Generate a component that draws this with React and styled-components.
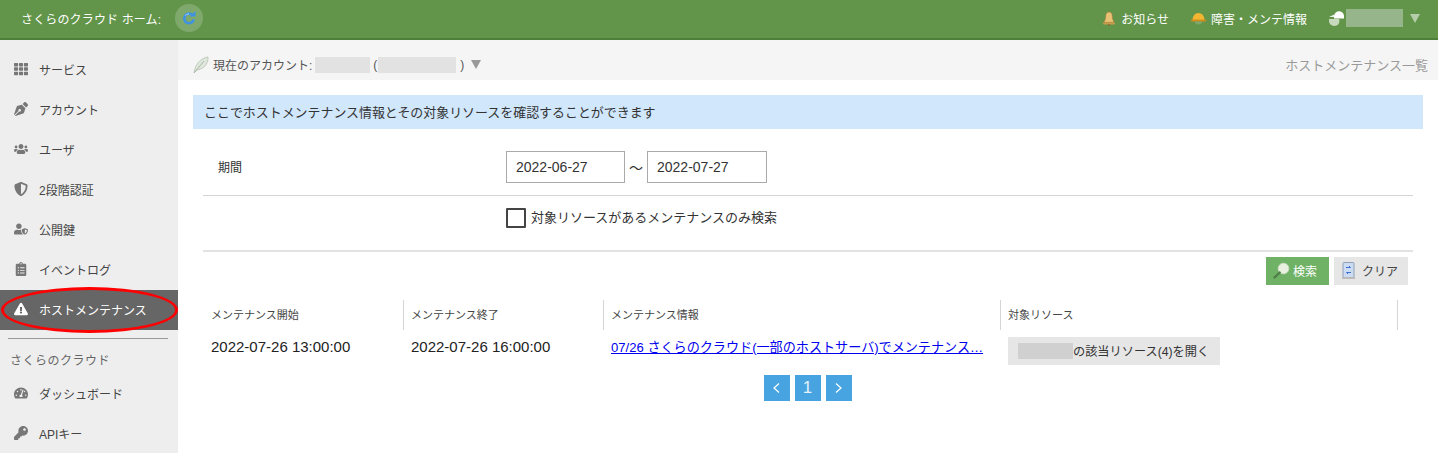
import React from "react";
import styled, { createGlobalStyle } from "styled-components";
import {
  FaTh,
  FaPenNib,
  FaUsers,
  FaShieldAlt,
  FaUserShield,
  FaClipboardList,
  FaExclamationTriangle,
  FaTachometerAlt,
  FaKey,
} from "react-icons/fa";

const GlobalStyle = createGlobalStyle`
  html, body {
    margin: 0;
    padding: 0;
    background: #fff;
    overflow: hidden;
    font-family: "Liberation Sans", "Noto Sans CJK JP", sans-serif;
    font-size: 13px;
    color: #333;
  }
  * { box-sizing: border-box; }
`;

const Page = styled.div`
  width: 1438px;
  height: 453px;
  overflow: hidden;
  display: flex;
  flex-direction: column;
`;

const Header = styled.header`
  height: 40px;
  flex: none;
  display: flex;
  align-items: center;
  justify-content: space-between;
  padding: 0 18px 2px 21px;
  background: #62954a;
  border-bottom: 2px solid #4f7d3a;
  color: #fff;
  font-size: 12px;
`;

const HeaderGroup = styled.div`
  display: flex;
  align-items: center;
`;

const HomeTitle = styled.span`
  letter-spacing: 0.15px;
`;

const ReloadBadge = styled.span`
  width: 28px;
  height: 28px;
  margin-left: 14px;
  border-radius: 50%;
  background: #7fa96c;
  display: flex;
  align-items: center;
  justify-content: center;
`;

const HeaderLink = styled.span`
  display: flex;
  align-items: center;
  gap: ${(p) => (p.$tight ? 1 : 5)}px;
  margin-left: ${(p) => p.$gap || 0}px;
`;

const Blur = styled.span`
  display: inline-block;
  width: ${(p) => p.$w}px;
  height: ${(p) => p.$h}px;
  background: ${(p) => p.$bg || "#e2e2e2"};
`;

const Caret = styled.span`
  width: 0;
  height: 0;
  border-left: 5px solid transparent;
  border-right: 5px solid transparent;
  border-top: 9px solid ${(p) => p.$color};
  margin-left: ${(p) => p.$gap}px;
`;

const Body = styled.div`
  flex: 1;
  display: flex;
  min-height: 0;
`;

const Sidebar = styled.nav`
  position: relative;
  width: 178px;
  flex: none;
  background: #eeeeee;
  padding-top: 10px;
`;

const NavItem = styled.div`
  height: 40px;
  display: flex;
  align-items: center;
  padding: 0 0 2px 14px;
  font-size: 12px;
  color: ${(p) => (p.$active ? "#fff" : "#444")};
  background: ${(p) => (p.$active ? "#666666" : "transparent")};
  svg {
    color: ${(p) => (p.$active ? "#fff" : "#777")};
  }
`;

const NavIcon = styled.span`
  width: 25px;
  flex: none;
  display: flex;
  align-items: center;
`;

const NavDivider = styled.hr`
  margin: 8px 10px 0 8px;
  border: 0;
  border-top: 1px solid #999;
`;

const NavLabel = styled.div`
  padding: 14px 0 4px 10px;
  font-size: 12px;
  letter-spacing: 0.5px;
  line-height: 17px;
  color: #666;
`;

const RedOval = styled.span`
  position: absolute;
  left: 1px;
  top: 247px;
  width: 177px;
  height: 46px;
  border: 3px solid #f00;
  border-radius: 50%;
  pointer-events: none;
`;

const Main = styled.main`
  flex: 1;
  min-width: 0;
`;

const SubHeader = styled.div`
  height: 40px;
  display: flex;
  align-items: center;
  justify-content: space-between;
  padding: 9px 10px 0 15px;
  background: #f5f5f5;
  font-size: 12px;
  color: #555;
`;

const AccountRow = styled.div`
  display: flex;
  align-items: center;
`;

const Paren = styled.span`
  margin: 0 ${(p) => p.$after || 0}px 0 ${(p) => p.$before || 0}px;
`;

const PageName = styled.span`
  color: #999;
  font-size: 13px;
`;

const Notice = styled.div`
  height: 34px;
  margin: 15px 15px 0;
  padding: 0 0 2px 11px;
  display: flex;
  align-items: center;
  background: #d1e7fc;
  font-size: 12.95px;
  color: #333;
`;

const FormArea = styled.div`
  margin: 0 25px;
`;

const FormRow = styled.div`
  display: flex;
  align-items: center;
  height: ${(p) => p.$h}px;
  padding: ${(p) => p.$top || 0}px 0 ${(p) => p.$bottom || 0}px;
  border-bottom: ${(p) => p.$line}px solid ${(p) => (p.$line > 1 ? "#e2e2e2" : "#d5d5d5")};
`;

const FormLabel = styled.div`
  width: 303px;
  padding: 0 0 2px 15px;
  font-size: 12px;
  color: #333;
`;

const DateBox = styled.div`
  width: ${(p) => p.$w}px;
  height: 32px;
  padding-left: 9px;
  display: flex;
  align-items: center;
  border: 1px solid #aaa;
  font-size: 14px;
  color: #333;
`;

const Tilde = styled.span`
  width: 22px;
  text-align: center;
  font-size: 14px;
  color: #333;
`;

const CheckBox = styled.span`
  width: 20px;
  height: 20px;
  margin-right: 5px;
  border: 2px solid #444;
  border-radius: 1px;
`;

const CheckText = styled.span`
  padding-bottom: 3px;
  font-size: 13px;
  color: #333;
`;

const ActionBar = styled.div`
  display: flex;
  justify-content: flex-end;
  gap: 5px;
  margin: 5px 5px 0 0;
`;

const ActionButton = styled.div`
  width: ${(p) => p.$w}px;
  height: 28px;
  padding: 0 0 2px ${(p) => p.$pad}px;
  display: flex;
  align-items: center;
  gap: ${(p) => p.$space}px;
  font-size: 12px;
  background: ${(p) => (p.$primary ? "#6fb266" : "#e6e6e6")};
  color: ${(p) => (p.$primary ? "#fff" : "#444")};
`;

const Table = styled.div`
  margin-top: 15px;
`;

const TableRow = styled.div`
  display: grid;
  grid-template-columns: 201px 200px 397px 397px;
  height: ${(p) => p.$h}px;
  align-items: center;
`;

const HeadCell = styled.div`
  height: 100%;
  padding: 0 0 2px ${(p) => p.$pad || 7}px;
  display: flex;
  align-items: center;
  font-size: 11px;
  color: #444;
  border-right: 1px solid #d5d5d5;
`;

const DataCell = styled.div`
  padding: 0 0 2px ${(p) => p.$pad || 7}px;
  font-size: 15px;
  color: #222;
  min-width: 0;
`;

const MaintLink = styled.a`
  display: block;
  white-space: nowrap;
  color: #0000ee;
  text-decoration: underline;
  font-size: 13.1px;
`;

const OpenCell = styled(DataCell)`
  align-self: end;
  padding-bottom: 0;
`;

const OpenButton = styled.div`
  width: 212px;
  height: 28px;
  padding-left: 10px;
  display: flex;
  align-items: center;
  background: #e6e6e6;
  font-size: 12.2px;
  color: #333;
`;

const Pager = styled.div`
  display: flex;
  justify-content: center;
  gap: 5px;
  margin: 10px 0 0 -1px;
`;

const PageButton = styled.div`
  width: 26px;
  height: 26px;
  display: flex;
  align-items: center;
  justify-content: center;
  background: #47a4e0;
  color: #e4f2fb;
  font-size: 17px;
  svg {
    display: block;
  }
`;

const ReloadIcon = () => (
  <svg width="16" height="16" viewBox="0 0 16 16">
    <path d="M11.600 5.200A4.800 4.800 0 1 0 12.800 9.200" fill="none" stroke="#3f93e0" strokeWidth="2.600" />
    <path d="M8.600 6.400h5.900V1z" fill="#3f93e0" />
    <path d="M4.200 5.600A4.700 4.700 0 0 1 8 3.900" fill="none" stroke="#a9d3f5" strokeWidth="1" />
  </svg>
);

const BellIcon = () => (
  <svg width="14" height="15" viewBox="0 0 14 15">
    <path d="M7 1c2.400 0 3.200 1.800 3.300 4 .1 3 .8 4.800 2.200 6.400H1.500C2.900 9.800 3.600 8 3.700 5 3.800 2.800 4.600 1 7 1z" fill="#e8c174" stroke="#9b7a3a" strokeWidth=".6" />
    <rect x="1" y="11.400" width="12" height="2" rx="1" fill="#c89b4d" />
    <circle cx="7" cy="14" r="1" fill="#8a6a30" />
  </svg>
);

const HelmetIcon = () => (
  <svg width="15" height="14" viewBox="0 0 15 14">
    <path d="M1.600 9C1.600 4.800 4 2 7.500 2s5.900 2.800 5.900 7z" fill="#f2b632" />
    <rect x="0" y="8.600" width="15" height="1.800" rx=".9" fill="#d48d1a" />
    <path d="M3.500 10.500c.7 2 2.200 3 4 3s3.300-1 4-3z" fill="#7fa96c" />
  </svg>
);

const UserLogo = () => (
  <svg width="16" height="18" viewBox="0 0 16 18">
    <path d="M5 7.500A5 5 0 0 1 15 7V9.500H5z" fill="#fff" />
    <path d="M0 10h10a5 5 0 0 1-5 7 5 5 0 0 1-5-5z" fill="#c6d9bc" />
    <path d="M0 8L5 5.500V8z" fill="#e8f0e3" />
  </svg>
);

const FeatherIcon = () => (
  <svg width="16" height="18" viewBox="0 0 16 18">
    <path d="M1 17C2 9 7 2 15 1c.5 5-2.500 11-9 12.500L3 14.500 1 17z" fill="#dfe6dc" stroke="#a9b5a5" strokeWidth=".6" />
    <path d="M1.500 16.500L11 5" stroke="#97a593" strokeWidth=".7" fill="none" />
  </svg>
);

const LoupeIcon = () => (
  <svg width="17" height="17" viewBox="0 0 17 17">
    <circle cx="10.500" cy="6.500" r="5.300" fill="#e8f1e0" stroke="#cfdcc5" />
    <path d="M6.700 10.500L1.500 15.500" stroke="#4f7d47" strokeWidth="2.400" strokeLinecap="round" />
  </svg>
);

const ClearIcon = () => (
  <svg width="13" height="17" viewBox="0 0 13 17">
    <rect x="1" y=".5" width="11" height="15" rx="1" fill="#cbdcf2" stroke="#8fa0b6" />
    <path d="M4 5.500h4.500M8.500 5.500L7 4M9 10.500H4.500M4.500 10.500L6 12" stroke="#3d6fd0" strokeWidth="1" fill="none" />
    <rect x="0" y="15" width="13" height="2" fill="#bbb" />
  </svg>
);

const Chevron = ({ flip }) => (
  <svg width="9" height="14" viewBox="0 0 9 14">
    <path d={flip ? "M2 2.500L7 7 2 11.500" : "M7 2.500L2 7 7 11.500"} fill="none" stroke="#fff" strokeWidth="1.200" />
  </svg>
);

const navTop = [
  { Icon: FaTh, label: "サービス" },
  { Icon: FaPenNib, label: "アカウント" },
  { Icon: FaUsers, label: "ユーザ" },
  { Icon: FaShieldAlt, label: "2段階認証" },
  { Icon: FaUserShield, label: "公開鍵" },
  { Icon: FaClipboardList, label: "イベントログ" },
  { Icon: FaExclamationTriangle, label: "ホストメンテナンス", active: true },
];

const navBottom = [
  { Icon: FaTachometerAlt, label: "ダッシュボード" },
  { Icon: FaKey, label: "APIキー" },
];

const renderNav = (items) =>
  items.map(({ Icon, label, active }) => (
    <NavItem key={label} $active={active}>
      <NavIcon>
        <Icon size={14} />
      </NavIcon>
      {label}
    </NavItem>
  ));

const App = () => (
  <Page>
    <GlobalStyle />
    <Header>
      <HeaderGroup>
        <HomeTitle>さくらのクラウド ホーム:</HomeTitle>
        <ReloadBadge>
          <ReloadIcon />
        </ReloadBadge>
      </HeaderGroup>
      <HeaderGroup>
        <HeaderLink>
          <BellIcon />
          お知らせ
        </HeaderLink>
        <HeaderLink $gap={22}>
          <HelmetIcon />
          障害・メンテ情報
        </HeaderLink>
        <HeaderLink $gap={22} $tight>
          <UserLogo />
          <Blur $w={57} $h={18} $bg="#97b58a" />
        </HeaderLink>
        <Caret $color="#b5cdaa" $gap={7} />
      </HeaderGroup>
    </Header>
    <Body>
      <Sidebar>
        {renderNav(navTop)}
        <NavDivider />
        <NavLabel>さくらのクラウド</NavLabel>
        {renderNav(navBottom)}
        <RedOval />
      </Sidebar>
      <Main>
        <SubHeader>
          <AccountRow>
            <FeatherIcon />
            <Paren $before={4} $after={3}>現在のアカウント:</Paren>
            <Blur $w={55} $h={16} />
            <Paren $before={3} $after={1}>(</Paren>
            <Blur $w={78} $h={16} />
            <Paren $before={4}>)</Paren>
            <Caret $color="#999" $gap={7} />
          </AccountRow>
          <PageName>ホストメンテナンス一覧</PageName>
        </SubHeader>
        <Notice>ここでホストメンテナンス情報とその対象リソースを確認することができます</Notice>
        <FormArea>
          <FormRow $h={67} $line={1} $top={10}>
            <FormLabel>期間</FormLabel>
            <DateBox $w={119}>2022-06-27</DateBox>
            <Tilde>〜</Tilde>
            <DateBox $w={120}>2022-07-27</DateBox>
          </FormRow>
          <FormRow $h={56} $line={2} $bottom={10}>
            <FormLabel />
            <CheckBox />
            <CheckText>対象リソースがあるメンテナンスのみ検索</CheckText>
          </FormRow>
          <ActionBar>
            <ActionButton $primary $w={63} $pad={7} $space={3}>
              <LoupeIcon />
              検索
            </ActionButton>
            <ActionButton $w={74} $pad={8} $space={7}>
              <ClearIcon />
              クリア
            </ActionButton>
          </ActionBar>
          <Table>
            <TableRow $h={30}>
              <HeadCell $pad={8}>メンテナンス開始</HeadCell>
              <HeadCell>メンテナンス終了</HeadCell>
              <HeadCell>メンテナンス情報</HeadCell>
              <HeadCell>対象リソース</HeadCell>
            </TableRow>
            <TableRow $h={35}>
              <DataCell $pad={8}>2022-07-26 13:00:00</DataCell>
              <DataCell>2022-07-26 16:00:00</DataCell>
              <DataCell>
                <MaintLink href="#">07/26 さくらのクラウド(一部のホストサーバ)でメンテナンス…</MaintLink>
              </DataCell>
              <OpenCell>
                <OpenButton>
                  <Blur $w={55} $h={16} $bg="#d0d0d0" />
                  の該当リソース(4)を開く
                </OpenButton>
              </OpenCell>
            </TableRow>
          </Table>
          <Pager>
            <PageButton>
              <Chevron />
            </PageButton>
            <PageButton>1</PageButton>
            <PageButton>
              <Chevron flip />
            </PageButton>
          </Pager>
        </FormArea>
      </Main>
    </Body>
  </Page>
);

export default App;
